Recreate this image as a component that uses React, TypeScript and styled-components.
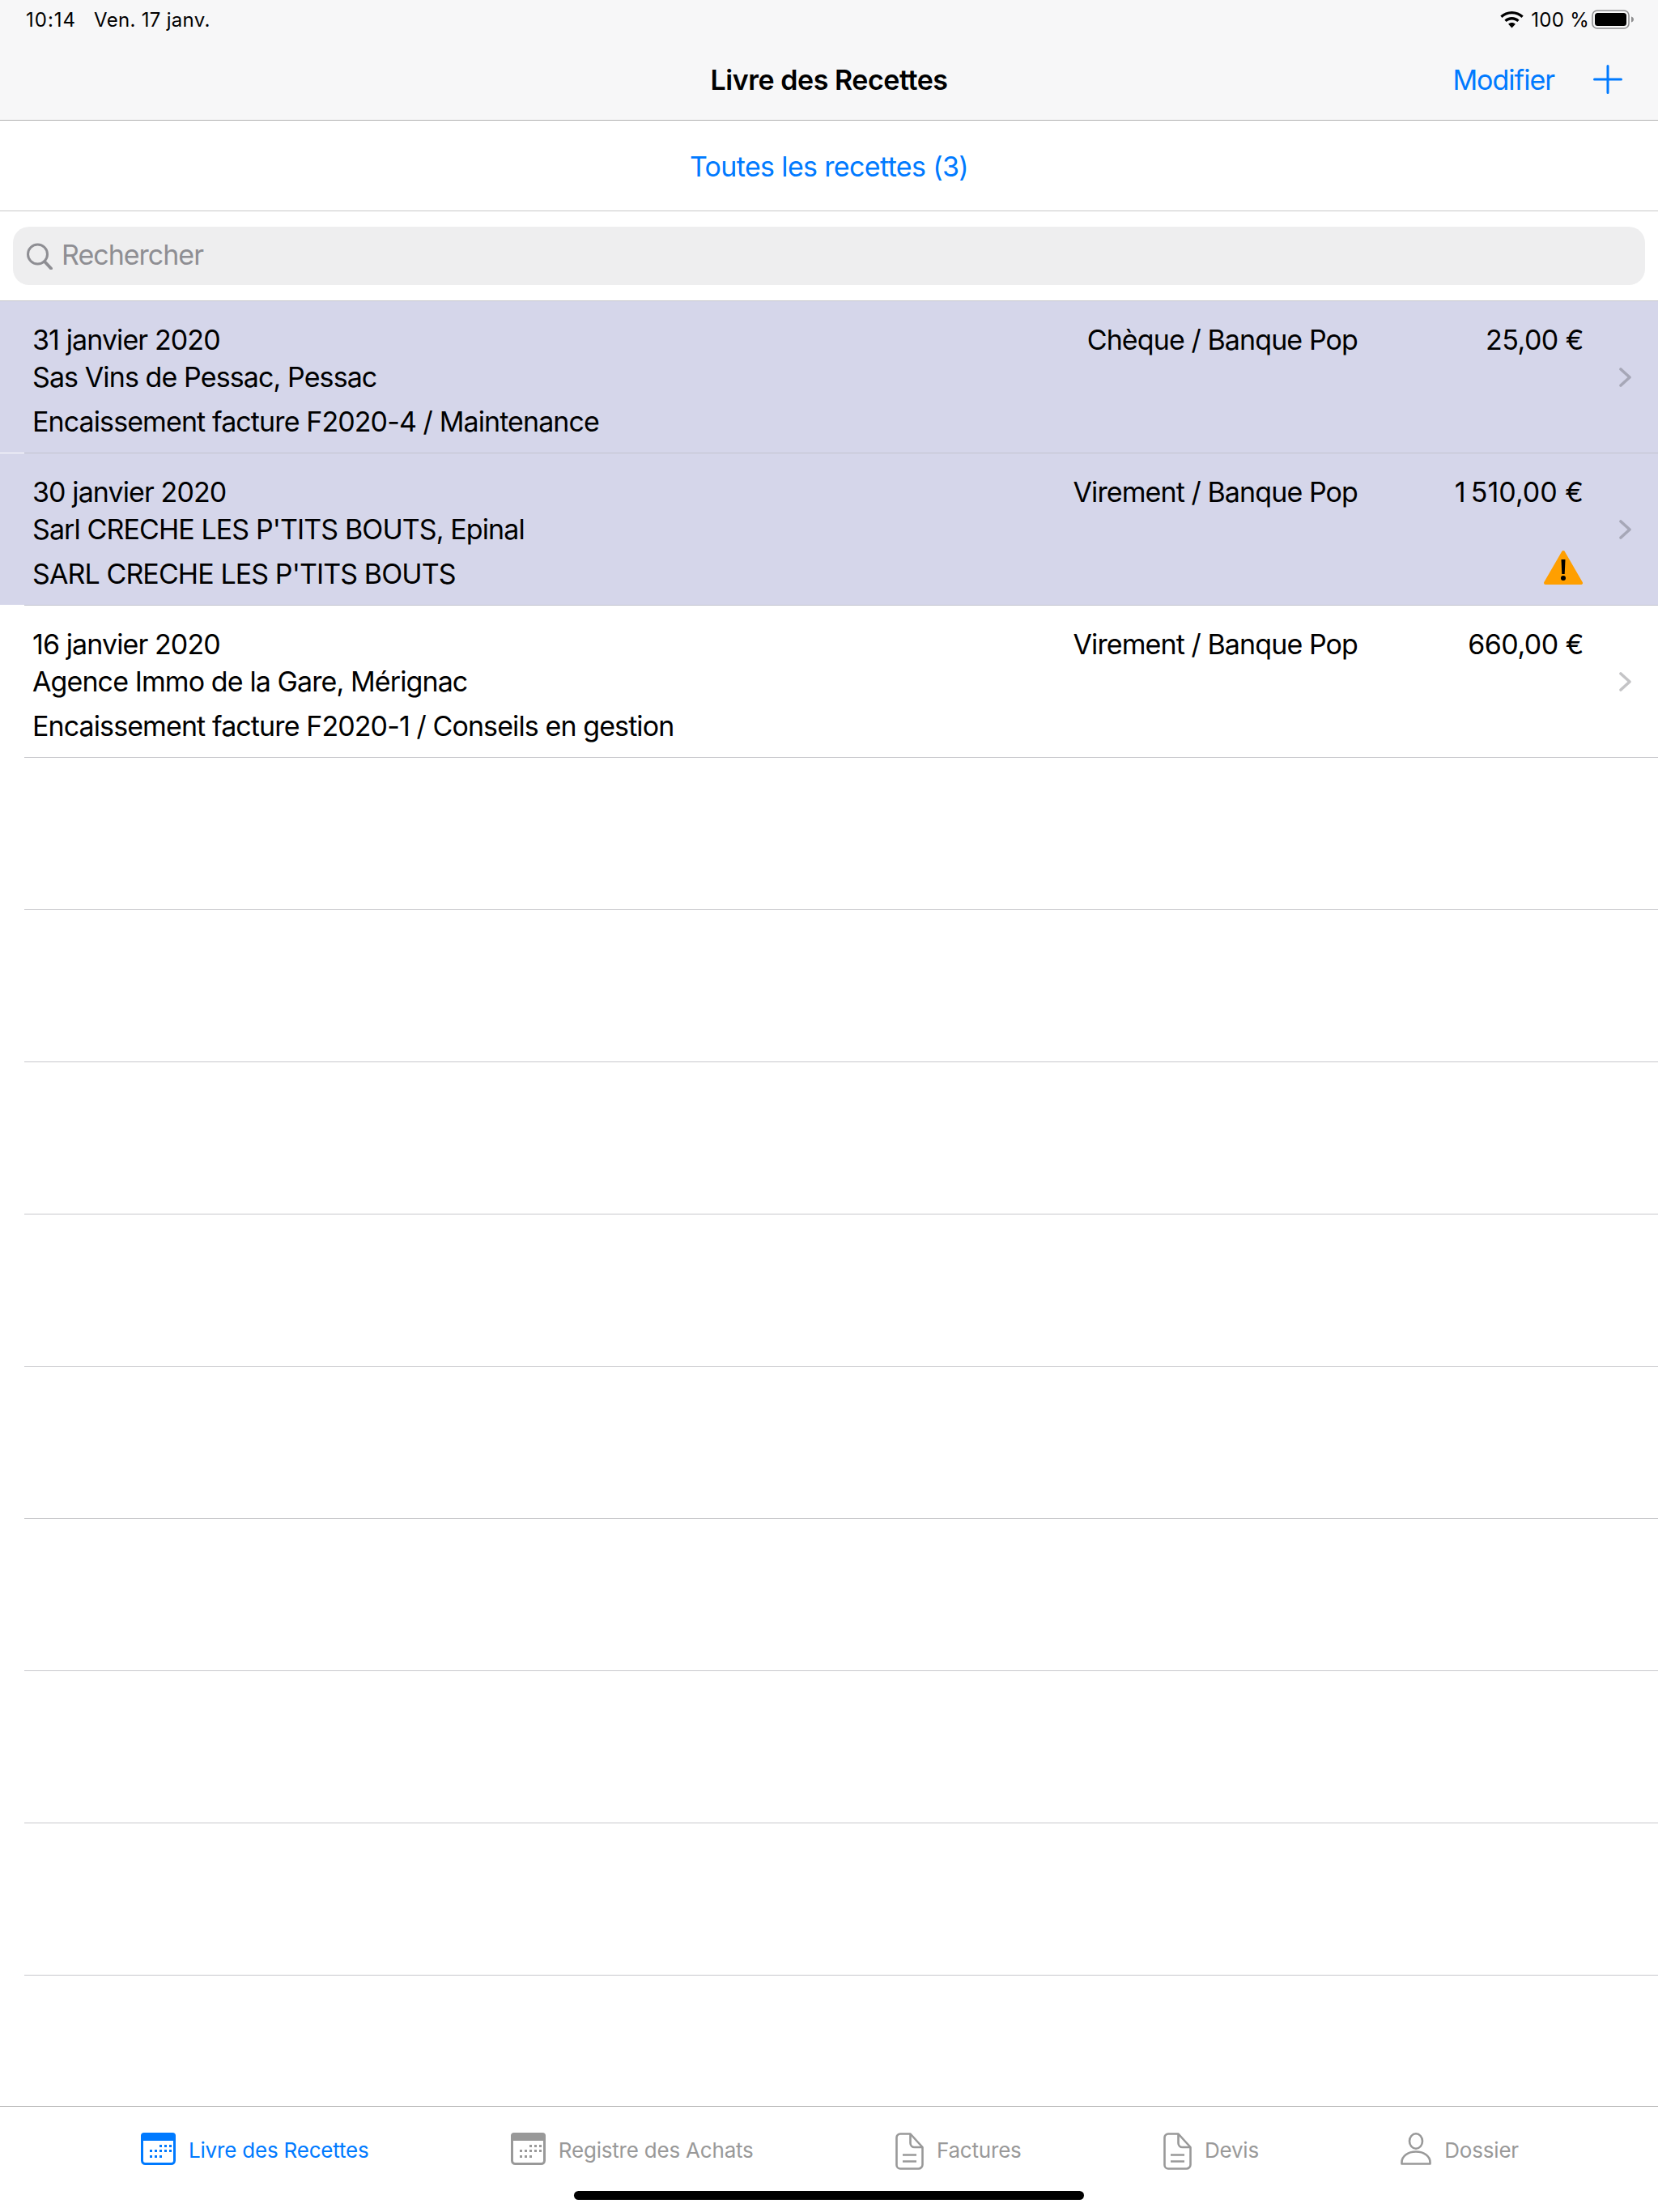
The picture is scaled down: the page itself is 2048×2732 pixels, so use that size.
import React from 'react';
import styled, {createGlobalStyle} from 'styled-components';

const GlobalStyle = createGlobalStyle`
    html, body {
        margin: 0;
        padding: 0;
        background: #fff;
    }
    body {
        font-family: Inter, "Liberation Sans", sans-serif;
        color: #000;
    }
`;

type Entry = {
    date: string;
    client: string;
    label: string;
    mode: string;
    amount: string;
    unread?: boolean;
    warning?: boolean;
};

const entries: Entry[] = [
    {
        date: '31 janvier 2020',
        client: 'Sas Vins de Pessac, Pessac',
        label: 'Encaissement facture F2020-4 / Maintenance',
        mode: 'Chèque / Banque Pop',
        amount: '25,00 €',
        unread: true,
    },
    {
        date: '30 janvier 2020',
        client: "Sarl CRECHE LES P'TITS BOUTS, Epinal",
        label: "SARL CRECHE LES P'TITS BOUTS",
        mode: 'Virement / Banque Pop',
        amount: '1\u202f510,00 €',
        unread: true,
        warning: true,
    },
    {
        date: '16 janvier 2020',
        client: 'Agence Immo de la Gare, Mérignac',
        label: 'Encaissement facture F2020-1 / Conseils en gestion',
        mode: 'Virement / Banque Pop',
        amount: '660,00 €',
    },
];

const CalendarIcon = () => (
    <svg width="43" height="40" viewBox="0 0 43 40" fill="none">
        <rect x="1.5" y="1.5" width="40" height="37" rx="4" stroke="currentColor" strokeWidth="3" />
        <path d="M4 0h35a4 4 0 0 1 4 4v6H0V4a4 4 0 0 1 4-4z" fill="currentColor" />
        <g fill="currentColor">
            <rect x="23" y="15" width="3" height="3" />
            <rect x="29" y="15" width="3" height="3" />
            <rect x="35" y="15" width="3" height="3" />
            <rect x="11" y="21" width="3" height="3" />
            <rect x="17" y="21" width="3" height="3" />
            <rect x="23" y="21" width="3" height="3" />
            <rect x="29" y="21" width="3" height="3" />
            <rect x="35" y="21" width="3" height="3" />
            <rect x="11" y="28" width="3" height="3" />
            <rect x="17" y="28" width="3" height="3" />
            <rect x="23" y="28" width="3" height="3" />
        </g>
    </svg>
);

const DocumentIcon = () => (
    <svg width="35" height="46" viewBox="0 0 35 46" fill="none" stroke="currentColor" strokeWidth="2.6">
        <path d="M6 1.5h12.5L33.5 18v21.5a5 5 0 0 1-5 5H6a4.5 4.5 0 0 1-4.5-4.5V6A4.500 4.500 0 0 1 6 1.500z" strokeLinejoin="round" />
        <path d="M18.500 1.500V13a5 5 0 0 0 5 5h10" />
        <path d="M9 27.500h17M9 35.500h17" />
    </svg>
);

const PersonIcon = () => (
    <svg width="38" height="40" viewBox="0 0 38 40" fill="none" stroke="currentColor" strokeWidth="2.6">
        <ellipse cx="19" cy="10.500" rx="8" ry="9.200" />
        <path d="M1.500 38.500v-2C1.500 29 9 23.500 19 23.500S36.500 29 36.500 36.500v2z" strokeLinejoin="round" />
    </svg>
);

const WifiIcon = () => (
    <svg width="29" height="21" viewBox="0 0 29 21" fill="currentColor">
        <path d="M14.500 0C9 0 4 2.100.3 5.600l2.200 2.400C5.600 5 9.800 3.300 14.500 3.300S23.400 5 26.500 8l2.200-2.400C25 2.100 20 0 14.500 0z" />
        <path d="M14.500 7.100c-3.500 0-6.700 1.300-9.100 3.600l2.300 2.400c1.800-1.700 4.200-2.700 6.800-2.700s5 1 6.800 2.700l2.300-2.400c-2.400-2.300-5.600-3.600-9.100-3.600z" />
        <path d="M14.500 14c-1.700 0-3.200.6-4.400 1.700l4.400 4.800 4.400-4.800C17.700 14.600 16.200 14 14.500 14z" />
    </svg>
);

const BatteryIcon = () => (
    <svg width="52" height="24" viewBox="0 0 52 24">
        <rect x="1" y="1" width="45" height="22" rx="6" fill="none" stroke="#8e8e90" strokeWidth="1.600" />
        <rect x="4" y="4" width="39" height="16" rx="3.500" fill="#000" />
        <path d="M49 8.500c1.700.5 3 1.800 3 3.500s-1.300 3-3 3.500z" fill="#8e8e90" />
    </svg>
);

const PlusIcon = () => (
    <svg width="36" height="36" viewBox="0 0 36 36" stroke="#007aff" strokeWidth="3" strokeLinecap="round">
        <path d="M18 1.500v33M1.500 18h33" />
    </svg>
);

const SearchIcon = () => (
    <svg width="33" height="33" viewBox="0 0 33 33" fill="none" stroke="#8e8e93" strokeWidth="3">
        <circle cx="14.500" cy="14" r="12" />
        <path d="M23 23l8 8.500" strokeWidth="4" strokeLinecap="round" />
    </svg>
);

const ChevronIcon = () => (
    <ChevronSvg width="15" height="24" viewBox="0 0 15 24" fill="none" stroke="rgba(60,60,67,0.3)" strokeWidth="3.600" strokeLinecap="round" strokeLinejoin="round">
        <path d="M2 2l11 10L2 22" />
    </ChevronSvg>
);

const WarningIcon = () => (
    <WarningSvg width="48" height="44" viewBox="0 0 48 44">
        <path d="M24 3L46 41H2z" fill="#ff9f00" stroke="#ff9f00" strokeWidth="4" strokeLinejoin="round" />
        <path d="M21.500 12h5l-.8 18h-3.400z" fill="#000" />
        <circle cx="24" cy="35" r="3" fill="#000" />
    </WarningSvg>
);

const App = () => {
    return (
        <Page>
            <GlobalStyle />
            <TopBar>
                <StatusBar>
                    <StatusTime>10:14</StatusTime>
                    <StatusDate>Ven. 17 janv.</StatusDate>
                    <StatusRight>
                        <WifiIcon />
                        <StatusPercent>100 %</StatusPercent>
                        <BatteryIcon />
                    </StatusRight>
                </StatusBar>
                <NavBar>
                    <span />
                    <NavTitle>Livre des Recettes</NavTitle>
                    <NavActions>
                        <NavLink>Modifier</NavLink>
                        <PlusIcon />
                    </NavActions>
                </NavBar>
            </TopBar>

            <FilterBar>
                <FilterLink>Toutes les recettes (3)</FilterLink>
            </FilterBar>

            <SearchWrap>
                <SearchField>
                    <SearchIcon />
                    <SearchText>Rechercher</SearchText>
                </SearchField>
            </SearchWrap>

            <List>
                {entries.map((entry) => (
                    <Row key={entry.date} $unread={entry.unread}>
                        <MainColumn>
                            <Line>{entry.date}</Line>
                            <Line>{entry.client}</Line>
                            <LabelLine>{entry.label}</LabelLine>
                        </MainColumn>
                        <ModeColumn>{entry.mode}</ModeColumn>
                        <AmountColumn>
                            <AmountText>{entry.amount}</AmountText>
                            {entry.warning && <WarningIcon />}
                        </AmountColumn>
                        <ChevronSlot>
                            <ChevronIcon />
                        </ChevronSlot>
                    </Row>
                ))}
                {Array.from({length: 8}).map((_, i) => (
                    <EmptyRow key={i} />
                ))}
            </List>

            <TabBar>
                <TabItem $active>
                    <CalendarIcon />
                    <TabLabel>Livre des Recettes</TabLabel>
                </TabItem>
                <TabItem>
                    <CalendarIcon />
                    <TabLabel>Registre des Achats</TabLabel>
                </TabItem>
                <TabItem>
                    <DocumentIcon />
                    <TabLabel>Factures</TabLabel>
                </TabItem>
                <TabItem>
                    <DocumentIcon />
                    <TabLabel>Devis</TabLabel>
                </TabItem>
                <TabItem>
                    <PersonIcon />
                    <TabLabel>Dossier</TabLabel>
                </TabItem>
            </TabBar>
            <HomeIndicator />
        </Page>
    );
};

const Page = styled.div`
    position: relative;
    width: 2048px;
    height: 2732px;
    overflow: hidden;
    background: #fff;
    display: flex;
    flex-direction: column;
`;

const TopBar = styled.header`
    height: 148px;
    background: #f7f7f8;
    border-bottom: 1px solid #b2b2b2;
    flex-shrink: 0;
`;

const StatusBar = styled.div`
    height: 48px;
    padding: 0 30px 0 32px;
    display: flex;
    align-items: center;
    font-size: 24px;
    letter-spacing: 0.3px;
`;

const StatusTime = styled.span`
    width: 84px;
    letter-spacing: 1px;
`;

const StatusDate = styled.span``;

const StatusRight = styled.div`
    margin-left: auto;
    display: flex;
    align-items: center;
`;

const StatusPercent = styled.span`
    margin: 0 3px 0 9px;
`;

const NavBar = styled.div`
    height: 100px;
    display: grid;
    grid-template-columns: 1fr auto 1fr;
    align-items: center;
`;

const NavTitle = styled.h1`
    margin: 0;
    font-size: 34px;
    font-weight: 600;
    letter-spacing: -0.45px;
`;

const NavActions = styled.div`
    padding-right: 44px;
    display: flex;
    justify-content: flex-end;
    align-items: center;
    gap: 48px;
`;

const NavLink = styled.span`
    font-size: 34px;
    letter-spacing: -1px;
    color: #007aff;
`;

const FilterBar = styled.div`
    height: 112px;
    box-sizing: border-box;
    padding-top: 2px;
    border-bottom: 1px solid #c8c8c8;
    display: flex;
    align-items: center;
    justify-content: center;
    flex-shrink: 0;
`;

const FilterLink = styled.span`
    font-size: 34px;
    letter-spacing: -0.65px;
    color: #007aff;
`;

const SearchWrap = styled.div`
    height: 110px;
    padding: 19px 16px;
    box-sizing: border-box;
    flex-shrink: 0;
`;

const SearchField = styled.div`
    height: 72px;
    background: #eeeeef;
    border-radius: 20px;
    padding: 0 0 0 16px;
    display: flex;
    align-items: center;
    gap: 11px;
`;

const SearchText = styled.span`
    margin-bottom: 3px;
    font-size: 34px;
    letter-spacing: -1px;
    color: #8e8e93;
`;

const List = styled.div`
    flex: 1;
    min-height: 0;
    overflow: hidden;
    border-top: 1px solid #c8c8cc;
`;

const Row = styled.div<{$unread?: boolean}>`
    position: relative;
    height: 188px;
    box-sizing: border-box;
    padding: 25px 0 0 40px;
    display: flex;
    font-size: 34px;
    letter-spacing: -0.9px;
    background: ${(p) => (p.$unread ? '#d5d6ea' : '#fff')};

    &::after {
        content: '';
        position: absolute;
        left: 30px;
        right: 0;
        bottom: 0;
        height: 1px;
        background: ${(p) => (p.$unread ? '#c2c3cf' : '#c8c8cc')};
    }
    &::before {
        content: '';
        position: absolute;
        left: 0;
        width: 30px;
        bottom: 0;
        height: 1px;
        background: #fff;
    }
`;

const MainColumn = styled.div`
    flex: 1;
`;

const Line = styled.div`
    height: 46px;
    line-height: 46px;
    white-space: nowrap;
`;

const LabelLine = styled(Line)`
    margin-top: 9px;
`;

const ModeColumn = styled(Line)`
    text-align: right;
`;

const AmountColumn = styled.div`
    width: 279px;
    display: flex;
    flex-direction: column;
    align-items: flex-end;
`;

const AmountText = styled(Line)`
    letter-spacing: -0.5px;
`;

const WarningSvg = styled.svg`
    display: block;
    margin: 48px 1px 0 0;
`;

const ChevronSlot = styled.div`
    width: 92px;
    padding: 57px 0 0 44px;
    box-sizing: border-box;
`;

const ChevronSvg = styled.svg`
    display: block;
`;

const EmptyRow = styled.div`
    height: 188px;
    box-sizing: border-box;
    margin-left: 30px;
    border-bottom: 1px solid #c8c8cc;
`;

const TabBar = styled.nav`
    height: 131px;
    padding: 32px 172px 0 174px;
    box-sizing: border-box;
    border-top: 1px solid #b2b2b2;
    flex-shrink: 0;
    display: flex;
    justify-content: space-between;
    align-items: flex-start;
`;

const TabItem = styled.div<{$active?: boolean}>`
    display: flex;
    align-items: flex-start;
    gap: 16px;
    color: ${(p) => (p.$active ? '#007aff' : '#999999')};
`;

const TabLabel = styled.span`
    font-size: 26px;
    line-height: 44px;
    letter-spacing: -0.2px;
`;

const HomeIndicator = styled.div`
    position: absolute;
    left: 709px;
    bottom: 15px;
    width: 630px;
    height: 11px;
    border-radius: 6px;
    background: #000;
`;

export default App;
